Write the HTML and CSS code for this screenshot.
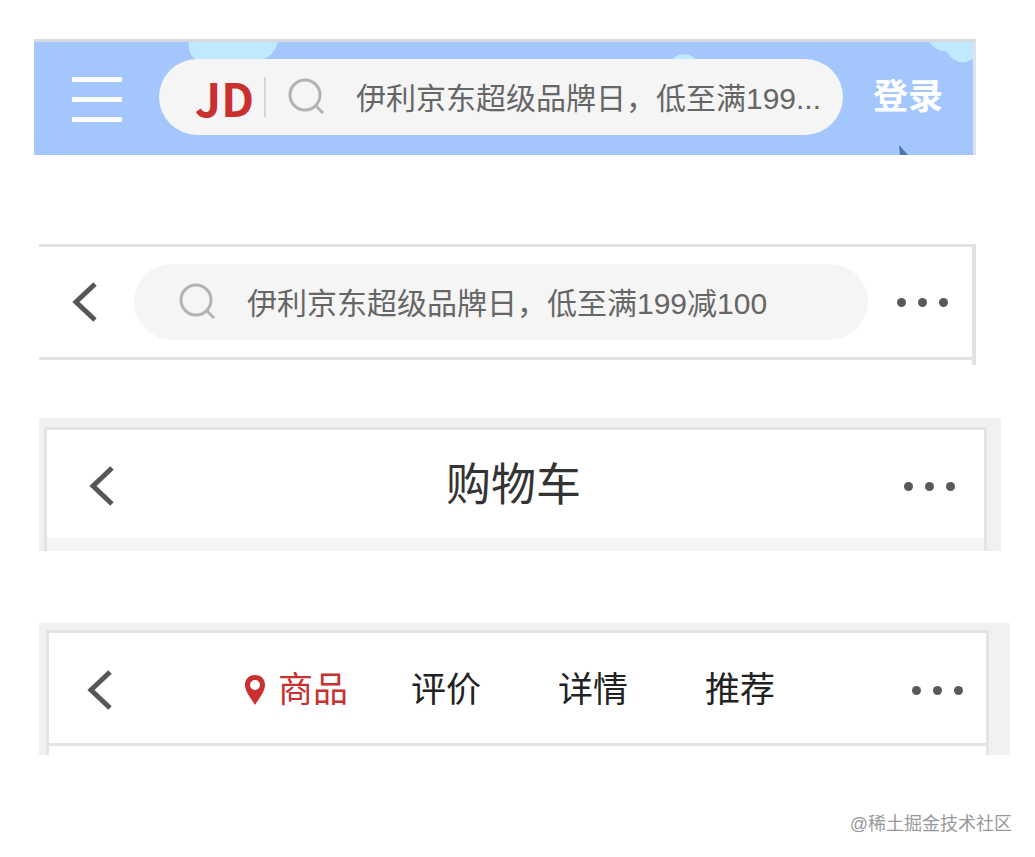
FILE: index.html
```
<!DOCTYPE html>
<html lang="zh-CN">
	<head>
		<meta charset="utf-8">
		<title>京东头部导航</title>
		<meta name="viewport" content="width=device-width, initial-scale=1.0">
		<link rel="stylesheet" href="styles.css">
	</head>
	<body>
		<header class="bar home">
			<svg class="sky" viewBox="0 0 939 113" preserveAspectRatio="xMaxYMin slice" aria-hidden="true">
				<path fill="#bfe9ff" d="M155 0h89q-4 14-16 18h-66q-9-7-7-18z"/>
				<ellipse fill="#bfe9ff" cx="650" cy="22" rx="13" ry="10"/>
				<path fill="#bfe9ff" d="M895 0q8 10 17 9q8 13 20 11l7-3V0z"/>
				<path fill="#4878ab" d="M865 103l9 10h-8z"/>
			</svg>
			<button class="menu" aria-label="菜单"><i></i><i></i><i></i></button>
			<form class="search">
				<span class="logo">JD</span>
				<svg class="glass" viewBox="0 0 38 38" aria-hidden="true"><circle cx="17" cy="17" r="15"/><path d="M27 27l8 8"/></svg>
				<input type="text" aria-label="搜索" value="伊利京东超级品牌日，低至满199...">
			</form>
			<a class="login" href="#">登录</a>
		</header>

		<header class="bar list">
			<div class="row">
				<button class="back" aria-label="返回"><svg viewBox="0 0 26 42"><path d="M23 3L4 21l19 18"/></svg></button>
				<form class="search">
					<svg class="glass" viewBox="0 0 38 38" aria-hidden="true"><circle cx="17" cy="17" r="15"/><path d="M27 27l8 8"/></svg>
					<input type="text" aria-label="搜索" value="伊利京东超级品牌日，低至满199减100">
				</form>
				<button class="more" aria-label="更多"><i></i><i></i><i></i></button>
			</div>
		</header>

		<header class="bar frame cart">
			<div class="sheet">
				<div class="row">
					<button class="back" aria-label="返回"><svg viewBox="0 0 26 42"><path d="M23 3L4 21l19 18"/></svg></button>
					<h1>购物车</h1>
					<button class="more" aria-label="更多"><i></i><i></i><i></i></button>
				</div>
			</div>
		</header>

		<header class="bar frame detail">
			<div class="sheet">
				<div class="row">
					<button class="back" aria-label="返回"><svg viewBox="0 0 26 42"><path d="M23 3L4 21l19 18"/></svg></button>
					<nav>
						<a class="active" href="#"><svg class="pin" viewBox="0 0 22 32" aria-hidden="true"><path fill-rule="evenodd" d="M11 1C5 1 1 5 1 11c0 7 6 13 10 20c4-7 10-13 10-20C21 5 17 1 11 1zM11 6a5 5 0 1 1 0 10a5 5 0 1 1 0-10z"/></svg>商品</a>
						<a href="#">评价</a>
						<a href="#">详情</a>
						<a href="#">推荐</a>
					</nav>
					<button class="more" aria-label="更多"><i></i><i></i><i></i></button>
				</div>
			</div>
		</header>

		<footer>@稀土掘金技术社区</footer>
	</body>
</html>
```

FILE: styles.css
```
* {
	box-sizing: border-box;
}
body {
	margin: 0;
	background-color: #fff;
	color: #333;
	font-family: 'Liberation Sans', 'Noto Sans CJK SC', sans-serif;
}
a {
	color: inherit;
	text-decoration: none;
}
button {
	flex: none;
	padding: 0;
	border: 0;
	background: none;
}
.row {
	display: flex;
	align-items: center;
}

/* search box */
.search {
	flex: 1;
	min-width: 0;
	height: 76px;
	display: flex;
	align-items: center;
	border-radius: 38px;
	background-color: #f5f5f5;
}
.search input {
	flex: 1;
	min-width: 0;
	height: 44px;
	padding: 0 0 2px;
	border: 0;
	background: none;
	color: #666;
	font: inherit;
	font-size: 30px;
	text-overflow: ellipsis;
}
.glass {
	flex: none;
	width: 38px;
	height: 38px;
	margin-right: 30px;
	fill: none;
	stroke: #b3b3b3;
	stroke-width: 3;
}

/* buttons */
.back {
	width: 26px;
	height: 42px;
}
.back svg {
	display: block;
	fill: none;
	stroke: #55565a;
	stroke-width: 5;
}
.more {
	display: flex;
	gap: 12px;
}
.more i {
	width: 9px;
	height: 9px;
	border-radius: 50%;
	background-color: #58595b;
}
.menu {
	display: flex;
	flex-direction: column;
	gap: 15px;
	width: 50px;
	padding-top: 4px;
}
.menu i {
	width: 100%;
	height: 5px;
	border-radius: 1px;
	background-color: #fff;
}

/* home */
.home {
	position: relative;
	display: flex;
	align-items: center;
	margin: 39px 59px 0 34px;
	padding: 17px 30px 20px 38px;
	border-top: 3px solid #d6d9de;
	border-right: 3px solid #dfe2ea;
	background-color: #a3c6fc;
}
.home > * {
	position: relative;
}
.home .sky {
	position: absolute;
	top: 0;
	left: 0;
	width: 100%;
	height: 100%;
}
.home .search {
	margin: 0 30px 0 37px;
	padding: 0 12px 0 36px;
}
.logo {
	margin-right: 22px;
	padding-right: 10px;
	border-right: 2px solid #d5d5d5;
	color: #c9302f;
	font-family: 'Noto Sans CJK SC', sans-serif;
	font-size: 46px;
	font-weight: 700;
	line-height: 40px;
}
.login {
	color: #fff;
	font-size: 35px;
	font-weight: 700;
	line-height: 44px;
}

/* list */
.list {
	margin: 89px 59px 0 39px;
	padding-bottom: 5px;
	border-top: 3px solid #e2e2e2;
	border-right: 4px solid #e2e2e2;
}
.list .row {
	padding: 17px 24px 17px 33px;
	border-bottom: 3px solid #e2e2e2;
}
.list .search {
	margin: 0 29px 0 36px;
	padding: 0 40px 0 45px;
}

/* bars on a grey frame */
.frame {
	background-color: #f1f1f1;
}
.frame .row {
	background-color: #fff;
}
.sheet {
	border: 3px solid #e4e4e4;
	border-bottom: 0;
}
.cart {
	margin: 53px 34px 0 39px;
	padding: 9px 14px 0 5px;
}
.cart .sheet {
	padding-bottom: 13px;
	background-color: #f5f5f5;
}
.cart .row {
	padding: 24px 29px 20px 42px;
}
.cart h1 {
	flex: 1;
	margin: 0;
	padding-left: 8px;
	color: #333;
	font-size: 45px;
	font-weight: 400;
	line-height: 64px;
	text-align: center;
}
.detail {
	margin: 72px 25px 0 39px;
	padding: 7px 21px 0 7px;
}
.detail .sheet {
	padding-bottom: 9px;
	background-color: #fff;
}
.detail .row {
	padding: 32px 23px 28px 38px;
	border-bottom: 3px solid #e4e4e4;
}
.detail nav {
	flex: 1;
	display: flex;
	justify-content: center;
	gap: 77px;
	padding-right: 6px;
	color: #222;
	font-size: 35px;
	line-height: 50px;
}
.detail nav a {
	display: flex;
	align-items: center;
}
.detail nav .active {
	margin-right: -14px;
	color: #c9302f;
}
.pin {
	width: 22px;
	height: 32px;
	margin-right: 12px;
	fill: #c9302f;
}

footer {
	margin: 55px 23px 0;
	color: #999;
	font-size: 18px;
	line-height: 28px;
	text-align: right;
}
```
